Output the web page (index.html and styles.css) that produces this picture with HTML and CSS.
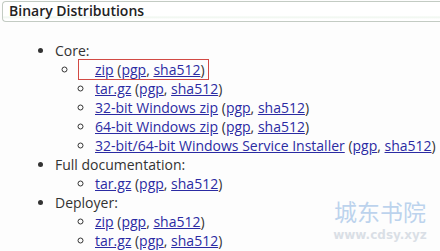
FILE: index.html
```html
<!DOCTYPE html>
<html lang="en">
<head>
  <meta charset="UTF-8">
  <title>Binary Distributions</title>
  <link rel="stylesheet" href="styles.css">
</head>
<body>
  <div class="section">
    <h3 class="section-title">Binary Distributions</h3>
    <ul class="dist">
      <li>Core:
        <ul>
          <li class="marked"><a href="#">zip</a> (<a href="#">pgp</a>, <a href="#">sha512</a>)</li>
          <li><a href="#">tar.gz</a> (<a href="#">pgp</a>, <a href="#">sha512</a>)</li>
          <li><a href="#">32-bit Windows zip</a> (<a href="#">pgp</a>, <a href="#">sha512</a>)</li>
          <li><a href="#">64-bit Windows zip</a> (<a href="#">pgp</a>, <a href="#">sha512</a>)</li>
          <li><a href="#">32-bit/64-bit Windows Service Installer</a> (<a href="#">pgp</a>, <a href="#">sha512</a>)</li>
        </ul>
      </li>
      <li>Full documentation:
        <ul>
          <li><a href="#">tar.gz</a> (<a href="#">pgp</a>, <a href="#">sha512</a>)</li>
        </ul>
      </li>
      <li>Deployer:
        <ul>
          <li><a href="#">zip</a> (<a href="#">pgp</a>, <a href="#">sha512</a>)</li>
          <li><a href="#">tar.gz</a> (<a href="#">pgp</a>, <a href="#">sha512</a>)</li>
        </ul>
      </li>
    </ul>
  </div>

  <!-- watermark -->
  <div class="watermark">
    <div class="wm-name">城东书院</div>
    <div class="wm-url">www.cdsy.xyz</div>
  </div>
</body>
</html>
```

FILE: styles.css
```css
body {
  margin: 0;
  padding: 1px 0 0 2px;
  font-family: "Open Sans", "Liberation Sans", sans-serif;
  font-size: 14px;
  color: #333;
  background-color: #fdfdfd;
  overflow: hidden;
}

.section-title {
  margin: 0;
  padding: 0 6px;
  height: 19px;
  line-height: 18px;
  font-size: 14px;
  font-weight: 600;
  color: #222;
  border: 1px solid #c3cbc3;
  border-right: none;
  border-radius: 4px 0 0 4px;
  background: linear-gradient(#fff 0, #fff 14px, #eef6ee 15px, #fff 17px);
}

.dist {
  margin: 19px 0 0;
  padding-left: 53px;
  line-height: 19px;
}

.dist ul {
  margin: 0;
  padding-left: 40px;
  list-style-type: circle;
}

.dist li.marked {
  outline: 1px solid #d24a44;
  width: 113px;
  margin-left: -16px;
  padding-left: 16px;
}

a {
  color: #2b2ba3;
}

.watermark {
  position: absolute;
  right: 10px;
  bottom: 10px;
  width: 100px;
  text-align: center;
  opacity: 0.4;
}

.wm-name {
  font-family: "Noto Sans CJK SC", sans-serif;
  font-size: 23px;
  line-height: 22px;
  margin-bottom: 7px;
  color: #5c95d6;
}

.wm-url {
  font-family: "DejaVu Sans", sans-serif;
  font-size: 12px;
  font-weight: bold;
  line-height: 12px;
  color: #a8b4c4;
}
```
